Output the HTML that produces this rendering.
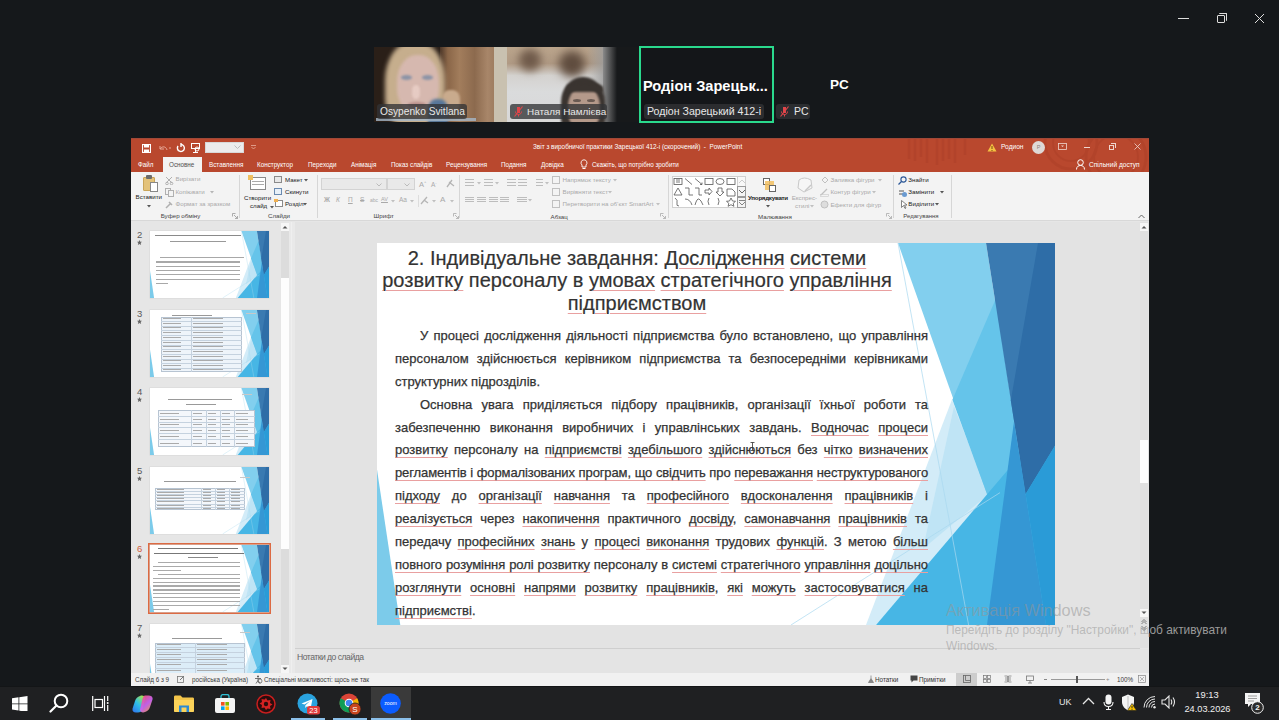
<!DOCTYPE html>
<html><head><meta charset="utf-8">
<style>
*{box-sizing:border-box}
html,body{margin:0;padding:0;width:1279px;height:720px;overflow:hidden;background:#15181b;font-family:"Liberation Sans",sans-serif}
.a{position:absolute}
.t{position:absolute;white-space:nowrap;line-height:1}
/* zoom */
.tile{position:absolute;overflow:hidden}
.lbl{position:absolute;height:15px;background:rgba(50,51,54,.78);border-radius:3px;color:#e8e8e8;font-size:10.5px;line-height:15px;padding:0 3px;white-space:nowrap}
/* ppt */
#ppt{position:absolute;left:131px;top:138px;width:1018px;height:548px;background:#e6e6e6;overflow:hidden}
#titlebar{position:absolute;left:0;top:0;width:1018px;height:34px;background:#b9482e;border-top:1px solid #a04838}
.tab{position:absolute;top:22px;color:#fff;font-size:6.3px;line-height:1;white-space:nowrap}
#ribbon{position:absolute;left:0;top:34px;width:1018px;height:49px;background:#f3f3f3;border-bottom:1px solid #d8d8d8}
.rb{position:absolute;font-size:6.2px;line-height:1;color:#333;white-space:nowrap}
.rg{position:absolute;font-size:6.2px;line-height:1;color:#444;white-space:nowrap}
.dis{color:#a9a9a9}
.sep{position:absolute;top:3px;width:1px;height:43px;background:#d6d6d6}
/* slide */
#slide{position:absolute;left:246px;top:105px;width:678px;height:382px;background:#fff;overflow:hidden}
.ln{position:absolute;left:18px;width:533px;height:23px;font-size:13px;line-height:23px;color:#333;-webkit-text-stroke:.25px #333;text-align:justify;text-align-last:justify;white-space:nowrap}
.u{text-decoration:underline;text-decoration-color:#e9a0a0;text-decoration-thickness:1px;text-underline-offset:3px}
/* taskbar */
#taskbar{position:absolute;left:0;top:686px;width:1279px;height:34px;background:#1f2022;box-shadow:inset 0 1px 0 #131517}
</style></head><body>

<!-- window controls top-right -->
<div class="a" style="left:1178px;top:18px;width:11px;height:1px;background:#ddd"></div>
<div class="a" style="left:1217px;top:15px;width:8px;height:8px;border:1px solid #ddd;border-radius:1px"></div>
<div class="a" style="left:1219px;top:13px;width:8px;height:8px;border-top:1px solid #ddd;border-right:1px solid #ddd;border-radius:1px"></div>
<svg class="a" style="left:1254px;top:13px" width="11" height="11"><path d="M1 1L10 10M10 1L1 10" stroke="#ddd" stroke-width="1"/></svg>

<!-- ZOOM TILES -->

<div class="tile" style="left:374px;top:47px;width:133px;height:75px;background:#2a1f18">
  <div class="a" style="left:66px;top:0;width:56px;height:75px;background:linear-gradient(90deg,#4a3527 0%,#8a6648 14%,#a27d5c 35%,#8c6a4e 62%,#a88669 85%,#9c7b5f 100%)"></div>
  <div class="a" style="left:120px;top:0;width:13px;height:75px;background:#c9c1b0"></div>
  <div class="a" style="left:11px;top:-6px;width:60px;height:86px;border-radius:46% 46% 34% 34%;background:#c6ae8d;filter:blur(2px)"></div>
  <div class="a" style="left:23px;top:8px;width:42px;height:58px;border-radius:46% 46% 42% 42%;background:#d6b8af;filter:blur(1.5px)"></div>
  <div class="a" style="left:27px;top:28px;width:11px;height:5px;border-radius:50%;background:#8b93a6;filter:blur(.8px)"></div>
  <div class="a" style="left:48px;top:28px;width:11px;height:5px;border-radius:50%;background:#8b93a6;filter:blur(.8px)"></div>
  <div class="a" style="left:38px;top:38px;width:8px;height:14px;border-radius:40%;background:#e6cbc3;filter:blur(1px)"></div>
  <div class="a" style="left:34px;top:55px;width:18px;height:5px;border-radius:50%;background:#b98f8a;filter:blur(1px)"></div>
  <div class="a" style="left:68px;top:43px;width:18px;height:22px;border-radius:40%;background:#c9ab8d;filter:blur(1px)"></div>
  <div class="a" style="left:54px;top:52px;width:20px;height:25px;border-radius:40% 40% 0 0;background:#58779a;filter:blur(1.5px)"></div>
  <div class="a" style="left:2px;top:71px;width:100px;height:3px;background:#a6b8c9;opacity:.8;filter:blur(.5px)"></div>
  <div class="lbl" style="left:3px;top:57px;width:90px;font-size:10.2px">Osypenko Svitlana</div>
</div>
<div class="tile" style="left:507px;top:47px;width:133px;height:75px;background:#17191b">
  <div class="a" style="left:0;top:0;width:100px;height:75px;background:linear-gradient(180deg,#bba58c 0%,#b09a84 22%,#d4d2cf 38%,#dadbdc 60%,#d8d8d8 100%)"></div>
  <div class="a" style="left:12px;top:2px;width:22px;height:22px;border-radius:50%;background:#6f5a4a;filter:blur(4px)"></div>
  <div class="a" style="left:52px;top:4px;width:26px;height:26px;border-radius:50%;background:#5f4c3e;filter:blur(5px)"></div>
  <div class="a" style="left:80px;top:0;width:20px;height:75px;background:linear-gradient(90deg,rgba(170,170,170,0) 0%,#9c9c9c 100%)"></div>
  <div class="a" style="left:96px;top:0;width:14px;height:75px;background:linear-gradient(90deg,#8a8a8a,#17191b)"></div>
  <div class="a" style="left:54px;top:30px;width:44px;height:52px;border-radius:48% 48% 18% 18%;background:#3a3430;filter:blur(1.2px)"></div>
  <div class="a" style="left:61px;top:40px;width:32px;height:42px;border-radius:45% 45% 40% 40%;background:#b4998a;filter:blur(1.2px)"></div><div class="a" style="left:66px;top:52px;width:8px;height:3px;border-radius:50%;background:#6a5a52;filter:blur(.6px)"></div><div class="a" style="left:80px;top:52px;width:8px;height:3px;border-radius:50%;background:#6a5a52;filter:blur(.6px)"></div><div class="a" style="left:60px;top:36px;width:36px;height:9px;border-radius:50% 50% 0 0;background:#3a3430;filter:blur(1px)"></div>
  <div class="lbl" style="left:3px;top:57px;width:97px;padding-left:17px;font-size:9.9px">Наталя Намлієва</div>
  <svg class="a" style="left:6px;top:59px" width="11" height="11"><path d="M4 1h3v6h-3z" fill="#e0454a"/><path d="M2.5 5.5c0 2 1.3 3 3 3s3-1 3-3M5.5 8.5v2" stroke="#e0454a" fill="none" stroke-width="1"/><path d="M1.5 10.5L9.5 0.5" stroke="#e0454a" stroke-width="1.2"/></svg>
</div>
<div class="tile" style="left:639px;top:46px;width:135px;height:77px;border:2px solid #2ad98d;background:#141619">
  <div class="t" style="left:2px;top:31px;font-size:14.6px;font-weight:bold;color:#fff">Родіон Зарецьк...</div>
  <div class="lbl" style="left:3px;top:56px;width:120px;font-size:10.6px">Родіон Зарецький 412-і</div>
</div>
<div class="t" style="left:830px;top:78px;font-size:13.5px;font-weight:bold;color:#fff">PC</div>
<div class="lbl" style="left:776px;top:104px;width:34px;padding-left:18px;font-size:10.5px">PC</div>
<svg class="a" style="left:779px;top:106px" width="11" height="11"><path d="M4 1h3v6h-3z" fill="#e0454a"/><path d="M2.5 5.5c0 2 1.3 3 3 3s3-1 3-3M5.5 8.5v2" stroke="#e0454a" fill="none" stroke-width="1"/><path d="M1.5 10.5L9.5 0.5" stroke="#e0454a" stroke-width="1.2"/></svg>


<!-- POWERPOINT -->
<div id="ppt">
  <div id="titlebar">
<svg class="a" style="left:760px;top:0" width="258" height="34" viewBox="0 0 258 34"><g opacity=".1" fill="none" stroke="#7a2010">
<path d="M18 0v20M24 0v22M30 0v18M36 0v24M46 0v26M52 0v22M58 0v20M64 0v24M74 0v16" stroke-width="2.5"/>
<circle cx="180" cy="4" r="26" stroke-width="3"/><circle cx="180" cy="4" r="18" stroke-width="2"/><circle cx="225" cy="18" r="30" stroke-width="3"/><circle cx="225" cy="18" r="22" stroke-width="2"/>
</g></svg>
<svg class="a" style="left:11px;top:5px" width="9" height="9"><rect x="0.5" y="0.5" width="8" height="8" fill="none" stroke="#fff" stroke-width="1.2"/><rect x="2" y="0.5" width="5" height="3" fill="#fff"/><rect x="2" y="5.5" width="5" height="3" fill="#fff"/></svg>
<svg class="a" style="left:27px;top:5px" width="14" height="9"><path d="M2 2v3h4" stroke="#e8a898" fill="none" stroke-width="1"/><path d="M2 5c2-3 6-3 7 1" stroke="#e8a898" fill="none" stroke-width="1"/><path d="M11 4h2" stroke="#e8a898"/></svg>
<svg class="a" style="left:45px;top:4px" width="10" height="10"><path d="M5 1.5a3.5 3.5 0 1 1 -3 1.5" stroke="#fff" fill="none" stroke-width="1.4"/><path d="M5 0v4" stroke="#fff" stroke-width="1.4"/></svg>
<svg class="a" style="left:60px;top:4px" width="10" height="11"><rect x="0.5" y="0.5" width="8" height="5" fill="none" stroke="#fff" stroke-width="1"/><path d="M4.5 5.5v4M2 9.5h5" stroke="#fff"/><circle cx="6" cy="6" r="2" fill="none" stroke="#fff"/></svg>
<div class="a" style="left:74px;top:3px;width:39px;height:11px;background:#ececec;border:1px solid #d8d8d8"></div>
<svg class="a" style="left:103px;top:6px" width="7" height="5"><path d="M0.5 0.5l3 3 3-3" stroke="#bbb" fill="none"/></svg>
<svg class="a" style="left:120px;top:6px" width="5" height="5"><path d="M0 0.5h5M0.5 2l2 2 2-2" stroke="#e8b0a0" fill="none" stroke-width=".8"/></svg>
<div class="tab" style="left:402px;top:5px;font-size:6.4px;top:5px;color:#fff">Звіт з виробничої практики Зарецької 412-і (скорочений)&nbsp; - &nbsp;PowerPoint</div>
<svg class="a" style="left:856px;top:4px" width="10" height="9"><path d="M5 0.5L9.5 8.5H0.5z" fill="#f5c242"/><path d="M5 3v3M5 7v1" stroke="#7a4a10" stroke-width="1"/></svg>
<div class="tab" style="left:870px;top:5px;font-size:6.6px">Родион</div>
<div class="a" style="left:901px;top:2px;width:13px;height:13px;border-radius:50%;background:#dfd9d6;color:#8a7f7a;font-size:5.5px;line-height:13px;text-align:center">Р</div>
<svg class="a" style="left:927px;top:4px" width="9" height="7"><rect x="0.5" y="0.5" width="8" height="6" fill="none" stroke="#efd6ce" stroke-width=".8"/><path d="M3 2.5l1.5 1.5 1.5-1.5z" fill="#efd6ce"/></svg>
<div class="a" style="left:953px;top:8px;width:6px;height:1px;background:#efd6ce"></div>
<div class="a" style="left:978px;top:6px;width:5px;height:5px;border:1px solid #efd6ce"></div>
<div class="a" style="left:980px;top:4px;width:5px;height:5px;border-top:1px solid #efd6ce;border-right:1px solid #efd6ce"></div>
<svg class="a" style="left:1003px;top:4px" width="7" height="7"><path d="M.5 .5L6.5 6.5M6.5 .5L.5 6.5" stroke="#efd6ce" stroke-width=".8"/></svg>
<div class="a" style="left:32px;top:18px;width:39px;height:16px;background:#f3f3f3"></div>
<div class="tab" style="left:7px;top:23px;color:#fff">Файл</div>
<div class="tab" style="left:38px;top:23px;color:#505050">Основне</div>
<div class="tab" style="left:78px;top:23px;color:#fff">Вставлення</div>
<div class="tab" style="left:126px;top:23px;color:#fff">Конструктор</div>
<div class="tab" style="left:177px;top:23px;color:#fff">Переходи</div>
<div class="tab" style="left:220px;top:23px;color:#fff">Анімація</div>
<div class="tab" style="left:260px;top:23px;color:#fff">Показ слайдів</div>
<div class="tab" style="left:315px;top:23px;color:#fff">Рецензування</div>
<div class="tab" style="left:370px;top:23px;color:#fff">Подання</div>
<div class="tab" style="left:410px;top:23px;color:#fff">Довідка</div>
<div class="tab" style="left:461px;top:23px;color:#fff">Скажіть, що потрібно зробити</div>
<svg class="a" style="left:449px;top:20px" width="8" height="11"><path d="M4 0.8a3 3 0 0 1 2 5.2v2h-4v-2a3 3 0 0 1 2-5.2z" fill="none" stroke="#fff" stroke-width=".9"/><path d="M2.5 9.5h3" stroke="#fff"/></svg>
<svg class="a" style="left:945px;top:20px" width="10" height="11"><circle cx="4.5" cy="3.5" r="2.8" fill="none" stroke="#fff" stroke-width="1"/><path d="M0.5 10.5c0-3 2-4 4-4s4 1 4 4" fill="none" stroke="#fff" stroke-width="1"/></svg>
<div class="tab" style="left:958px;top:23px;font-size:6.6px">Спільний доступ</div>
</div>

  <div id="ribbon">
<div class="a" style="left:12px;top:5px;width:12px;height:14px;background:#e3c27a;border:1px solid #c9a55a;border-radius:1px"></div>
<div class="a" style="left:15px;top:3px;width:6px;height:4px;background:#6b6b6b;border-radius:1px"></div>
<div class="a" style="left:19px;top:10px;width:8px;height:10px;background:#fff;border:1px solid #888"></div>
<div class="rb" style="left:4.5px;top:22.4px;font-size:6.2px;color:#222">Вставити</div>
<svg class="a" style="left:16px;top:32.5px" width="5" height="3"><path d="M0 0h4l-2 2.5z" fill="#555"/></svg>
<svg class="a" style="left:34px;top:4px" width="9" height="9"><path d="M1 1l6 6M7 1l-6 6" stroke="#b0b0b0" stroke-width="1"/><circle cx="2" cy="7.5" r="1.3" fill="none" stroke="#b0b0b0"/><circle cx="6.5" cy="7.5" r="1.3" fill="none" stroke="#b0b0b0"/></svg>
<svg class="a" style="left:34px;top:16px" width="9" height="9"><rect x="0.5" y="0.5" width="5" height="6" fill="none" stroke="#b0b0b0"/><rect x="3.5" y="2.5" width="5" height="6" fill="#f3f3f3" stroke="#b0b0b0"/></svg>
<svg class="a" style="left:34px;top:28px" width="9" height="9"><path d="M1 8l4-4M4 2l3 3" stroke="#b0b0b0" stroke-width="1.5"/></svg>
<div class="rb dis" style="left:44.5px;top:4.4px;font-size:6.2px;">Вирізати</div>
<div class="rb dis" style="left:44.5px;top:16.9px;font-size:6.2px;">Копіювати</div>
<svg class="a" style="left:79px;top:19px" width="5" height="3"><path d="M0 0h4l-2 2.5z" fill="#b5b5b5"/></svg>
<div class="rb dis" style="left:44.5px;top:28.9px;font-size:6.2px;">Формат за зразком</div>
<div class="rg" style="left:29.7px;top:41.2px;font-size:6.2px;">Буфер обміну</div>
<svg class="a" style="left:101px;top:41px" width="6" height="6"><path d="M0.5 0.5h3M0.5 0.5v3M2 2l3.5 3.5M5.5 3v2.5H3" stroke="#999" fill="none" stroke-width=".8"/></svg>
<div class="sep" style="left:108px"></div>
<div class="a" style="left:119px;top:5px;width:16px;height:13px;background:#fff;border:1px solid #8a8a8a"></div>
<div class="a" style="left:121px;top:9px;width:12px;height:1px;background:#aaa"></div>
<div class="a" style="left:121px;top:12px;width:12px;height:1px;background:#aaa"></div>
<div class="a" style="left:117px;top:3px;width:5px;height:5px;background:#f0c060"></div>
<div class="rb" style="left:113.0px;top:22.7px;font-size:6.2px;color:#222">Створити</div>
<div class="rb" style="left:119.0px;top:31.2px;font-size:6.2px;color:#222">слайд</div>
<svg class="a" style="left:139px;top:33.5px" width="5" height="3"><path d="M0 0h4l-2 2.5z" fill="#555"/></svg>
<div class="a" style="left:143px;top:4px;width:8px;height:7px;background:#e8e8e8;border:1px solid #8a8a8a"></div>
<div class="a" style="left:143px;top:16px;width:8px;height:7px;background:#e8f0f8;border:1px solid #6a8ab0"></div>
<div class="a" style="left:144px;top:28px;width:8px;height:7px;background:#fff;border:1px solid #8a8a8a"></div>
<div class="a" style="left:143px;top:27px;width:4px;height:3px;background:#f0b050"></div>
<div class="rb" style="left:154.0px;top:4.9px;font-size:6.2px;color:#222">Макет</div>
<svg class="a" style="left:173px;top:7px" width="5" height="3"><path d="M0 0h4l-2 2.5z" fill="#555"/></svg>
<div class="rb" style="left:154.0px;top:16.9px;font-size:6.2px;color:#222">Скинути</div>
<div class="rb" style="left:154.0px;top:29.3px;font-size:6.2px;color:#222">Розділ</div>
<svg class="a" style="left:172px;top:31.400000000000006px" width="5" height="3"><path d="M0 0h4l-2 2.5z" fill="#555"/></svg>
<div class="rg" style="left:137.0px;top:41.2px;font-size:6.2px;">Слайди</div>
<div class="sep" style="left:186px"></div>
<div class="a" style="left:190px;top:6px;width:66px;height:12px;background:#e9e9e9;border:1px solid #d3d3d3"></div>
<div class="a" style="left:256px;top:6px;width:28px;height:12px;background:#e9e9e9;border:1px solid #d3d3d3"></div>
<svg class="a" style="left:245px;top:11px" width="6" height="4"><path d="M0.5 0.5l2.5 2.5 2.5-2.5" stroke="#bbb" fill="none"/></svg>
<svg class="a" style="left:273px;top:11px" width="6" height="4"><path d="M0.5 0.5l2.5 2.5 2.5-2.5" stroke="#bbb" fill="none"/></svg>
<div class="rb dis" style="left:288.0px;top:8.2px;font-size:7.5px;">A<sup style="font-size:4px">+</sup></div>
<div class="rb dis" style="left:300.0px;top:8.8px;font-size:6.5px;">A<sup style="font-size:4px">-</sup></div>
<svg class="a" style="left:315px;top:7px" width="9" height="9"><path d="M1 8l5-7M3 3l5 4" stroke="#b5b5b5" stroke-width="1.3"/></svg>
<div class="rb dis" style="left:193.0px;top:24.8px;font-size:6.5px;"><b>Ж</b></div>
<div class="rb dis" style="left:205.0px;top:24.8px;font-size:6.5px;"><i>К</i></div>
<div class="rb dis" style="left:217.0px;top:24.8px;font-size:6.5px;"><u>П</u></div>
<div class="rb dis" style="left:229.0px;top:24.8px;font-size:6.5px;"><s>S</s></div>
<div class="rb dis" style="left:239.0px;top:25.5px;font-size:5px;">abc</div>
<div class="rb dis" style="left:250.0px;top:25.2px;font-size:5.5px;"><u>AV</u></div>
<div class="rb dis" style="left:268.0px;top:24.8px;font-size:6.5px;">Aa</div>
<div class="rb dis" style="left:309.0px;top:24.0px;font-size:8px;">A</div>
<svg class="a" style="left:260px;top:28px" width="5" height="3"><path d="M0 0h4l-2 2.5z" fill="#c0c0c0"/></svg>
<svg class="a" style="left:279px;top:28px" width="5" height="3"><path d="M0 0h4l-2 2.5z" fill="#c0c0c0"/></svg>
<svg class="a" style="left:301px;top:28px" width="5" height="3"><path d="M0 0h4l-2 2.5z" fill="#c0c0c0"/></svg>
<svg class="a" style="left:319px;top:28px" width="5" height="3"><path d="M0 0h4l-2 2.5z" fill="#c0c0c0"/></svg>
<div class="a" style="left:287px;top:23px;width:1px;height:12px;background:#ddd"></div>
<svg class="a" style="left:289px;top:24px" width="11" height="9"><path d="M1 8l6-7M4 4l4 3" stroke="#b5b5b5" stroke-width="1.3"/></svg>
<div class="rg" style="left:242.6px;top:41.2px;font-size:6.2px;">Шрифт</div>
<svg class="a" style="left:322px;top:41px" width="6" height="6"><path d="M0.5 0.5h3M0.5 0.5v3M2 2l3.5 3.5M5.5 3v2.5H3" stroke="#aaa" fill="none" stroke-width=".8"/></svg>
<div class="sep" style="left:328px"></div>
<div class="a" style="left:334px;top:7px;width:9px;height:1px;background:#bdbdbd"></div>
<div class="a" style="left:334px;top:10px;width:9px;height:1px;background:#bdbdbd"></div>
<div class="a" style="left:334px;top:13px;width:9px;height:1px;background:#bdbdbd"></div>
<svg class="a" style="left:346px;top:10px" width="5" height="3"><path d="M0 0h4l-2 2.5z" fill="#c0c0c0"/></svg>
<div class="a" style="left:353px;top:7px;width:9px;height:1px;background:#bdbdbd"></div>
<div class="a" style="left:353px;top:10px;width:9px;height:1px;background:#bdbdbd"></div>
<div class="a" style="left:353px;top:13px;width:9px;height:1px;background:#bdbdbd"></div>
<svg class="a" style="left:364px;top:10px" width="5" height="3"><path d="M0 0h4l-2 2.5z" fill="#c0c0c0"/></svg>
<div class="a" style="left:376px;top:7px;width:9px;height:1px;background:#bdbdbd"></div>
<div class="a" style="left:376px;top:10px;width:9px;height:1px;background:#bdbdbd"></div>
<div class="a" style="left:376px;top:13px;width:9px;height:1px;background:#bdbdbd"></div>
<div class="a" style="left:387px;top:7px;width:9px;height:1px;background:#bdbdbd"></div>
<div class="a" style="left:387px;top:10px;width:9px;height:1px;background:#bdbdbd"></div>
<div class="a" style="left:387px;top:13px;width:9px;height:1px;background:#bdbdbd"></div>
<div class="a" style="left:405px;top:7px;width:7px;height:1px;background:#bdbdbd"></div>
<div class="a" style="left:405px;top:10px;width:7px;height:1px;background:#bdbdbd"></div>
<div class="a" style="left:405px;top:13px;width:7px;height:1px;background:#bdbdbd"></div>
<svg class="a" style="left:414px;top:10px" width="5" height="3"><path d="M0 0h4l-2 2.5z" fill="#c0c0c0"/></svg>
<div class="a" style="left:334px;top:25px;width:9px;height:1px;background:#bdbdbd"></div>
<div class="a" style="left:334px;top:27px;width:9px;height:1px;background:#bdbdbd"></div>
<div class="a" style="left:334px;top:29px;width:9px;height:1px;background:#bdbdbd"></div>
<div class="a" style="left:346px;top:25px;width:9px;height:1px;background:#bdbdbd"></div>
<div class="a" style="left:346px;top:27px;width:9px;height:1px;background:#bdbdbd"></div>
<div class="a" style="left:346px;top:29px;width:9px;height:1px;background:#bdbdbd"></div>
<div class="a" style="left:358px;top:25px;width:9px;height:1px;background:#bdbdbd"></div>
<div class="a" style="left:358px;top:27px;width:9px;height:1px;background:#bdbdbd"></div>
<div class="a" style="left:358px;top:29px;width:9px;height:1px;background:#bdbdbd"></div>
<div class="a" style="left:369px;top:25px;width:9px;height:1px;background:#bdbdbd"></div>
<div class="a" style="left:369px;top:27px;width:9px;height:1px;background:#bdbdbd"></div>
<div class="a" style="left:369px;top:29px;width:9px;height:1px;background:#bdbdbd"></div>
<div class="a" style="left:386px;top:25px;width:10px;height:1px;background:#bdbdbd"></div>
<div class="a" style="left:386px;top:27px;width:10px;height:1px;background:#bdbdbd"></div>
<div class="a" style="left:386px;top:29px;width:10px;height:1px;background:#bdbdbd"></div>
<svg class="a" style="left:397px;top:27px" width="5" height="3"><path d="M0 0h4l-2 2.5z" fill="#c0c0c0"/></svg>
<div class="a" style="left:550px;top:2px;width:1px;height:38px;background:transparent"></div>
<div class="a" style="left:421px;top:4px;width:8px;height:8px;border:1px solid #c0c0c0"></div>
<div class="a" style="left:421px;top:16px;width:8px;height:8px;border:1px solid #c0c0c0"></div>
<div class="a" style="left:421px;top:28px;width:8px;height:8px;border:1px solid #c0c0c0"></div>
<div class="rb dis" style="left:431.6px;top:4.5px;font-size:6.2px;">Напрямок тексту</div>
<svg class="a" style="left:482px;top:6.599999999999994px" width="5" height="3"><path d="M0 0h4l-2 2.5z" fill="#c0c0c0"/></svg>
<div class="rb dis" style="left:431.6px;top:17.1px;font-size:6.2px;">Вирівняти текст</div>
<svg class="a" style="left:477px;top:19.19999999999999px" width="5" height="3"><path d="M0 0h4l-2 2.5z" fill="#c0c0c0"/></svg>
<div class="rb dis" style="left:431.6px;top:29.2px;font-size:6.2px;">Перетворити на об’єкт SmartArt</div>
<svg class="a" style="left:525px;top:31.30000000000001px" width="5" height="3"><path d="M0 0h4l-2 2.5z" fill="#c0c0c0"/></svg>
<div class="rg" style="left:419.5px;top:41.7px;font-size:6.2px;">Абзац</div>
<svg class="a" style="left:529px;top:41px" width="6" height="6"><path d="M0.5 0.5h3M0.5 0.5v3M2 2l3.5 3.5M5.5 3v2.5H3" stroke="#aaa" fill="none" stroke-width=".8"/></svg>
<div class="sep" style="left:536.5px"></div>
<div class="a" style="left:541px;top:4px;width:74px;height:32px;background:#fff;border:1px solid #d0d0d0"></div>
<svg class="a" style="left:542px;top:5px" width="64" height="30" viewBox="0 0 64 30"><g fill="none" stroke="#555" stroke-width=".8">
<rect x="1" y="1.5" width="8" height="6"/><path d="M3 3h4M3 5h4"/>
<path d="M12 1.5l7 6"/><path d="M22 1.5l7 6M27 7.5h2v-2"/>
<rect x="32" y="1.5" width="8" height="6"/><ellipse cx="47" cy="4.5" rx="4" ry="3"/><rect x="54" y="1.5" width="8" height="6"/>
<path d="M1 18l4-7 4 7z"/><path d="M12 11h4v7h4"/><path d="M22 11h4v7h3"/><path d="M32 13h4v-2l3 3.5-3 3.5v-2h-4z"/><path d="M45 11h4v4h2l-4 4-4-4h2z"/><path d="M54 12h5l3 3v4h-8z"/>
<path d="M2 21q3 2 2 5t2 3"/><path d="M12 22q5 0 7 6"/><path d="M22 28q2-7 4-6t4 6"/><path d="M36 21q-2 3 0 7"/><path d="M45 21q2 3 0 7"/><path d="M58 21l1.5 3 3 .3-2.3 2 .7 3-2.9-1.6-2.9 1.6.7-3-2.3-2 3-.3z"/>
</g></svg>
<div class="a" style="left:606px;top:4px;width:9px;height:11px;border:1px solid #d0d0d0;background:#f8f8f8"></div>
<div class="a" style="left:606px;top:14px;width:9px;height:11px;border:1px solid #9a9a9a;background:#f4f4f4"></div>
<div class="a" style="left:606px;top:25px;width:9px;height:11px;border:1px solid #9a9a9a;background:#f4f4f4"></div>
<svg class="a" style="left:607px;top:7px" width="8" height="5"><path d="M1 4l3-3 3 3" stroke="#ccc" fill="none"/></svg>
<svg class="a" style="left:607px;top:17px" width="8" height="5"><path d="M1 1l3 3 3-3" stroke="#666" fill="none"/></svg>
<svg class="a" style="left:607px;top:28px" width="8" height="6"><path d="M1 0.5h6M1 2l3 3 3-3" stroke="#666" fill="none" stroke-width=".8"/></svg>
<div class="a" style="left:632px;top:6px;width:7px;height:7px;background:#fff;border:1px solid #666"></div>
<div class="a" style="left:634px;top:9px;width:9px;height:9px;background:#f2c060;opacity:.85"></div>
<div class="a" style="left:638px;top:13px;width:7px;height:7px;background:#fff;border:1px solid #666"></div>
<div class="rb" style="left:617.0px;top:22.9px;font-size:6.2px;color:#222;font-weight:bold;letter-spacing:-.25px">Упорядкувати</div>
<svg class="a" style="left:635px;top:32.5px" width="5" height="3"><path d="M0 0h4l-2 2.5z" fill="#555"/></svg>
<svg class="a" style="left:665px;top:4px" width="18" height="17"><path d="M3 4q5-4 12 0l1 8-8 4-6-4z" fill="#f6f6f6" stroke="#c8c8c8"/><path d="M9 15l6-6" stroke="#c8c8c8" stroke-width="1.5"/></svg>
<div class="rb dis" style="left:660.7px;top:22.9px;font-size:6.2px;">Експрес-</div>
<div class="rb dis" style="left:664.0px;top:30.9px;font-size:6.2px;">стилі</div>
<svg class="a" style="left:679px;top:33px" width="5" height="3"><path d="M0 0h4l-2 2.5z" fill="#c0c0c0"/></svg>
<svg class="a" style="left:689px;top:4px" width="9" height="9"><path d="M2 4l3-3 3 3-3 3z" fill="none" stroke="#c0c0c0"/></svg>
<svg class="a" style="left:689px;top:16px" width="9" height="9"><path d="M1 7l6-6" stroke="#c0c0c0" stroke-width="1.3"/><rect x="0.5" y="6.5" width="8" height="2" fill="none" stroke="#c8c8c8" stroke-width=".6"/></svg>
<svg class="a" style="left:689px;top:28px" width="9" height="9"><circle cx="4.5" cy="4.5" r="3.5" fill="#ddd" stroke="#c0c0c0"/></svg>
<div class="rb dis" style="left:699.4px;top:4.5px;font-size:6.2px;">Заливка фігури</div>
<svg class="a" style="left:747px;top:6.599999999999994px" width="5" height="3"><path d="M0 0h4l-2 2.5z" fill="#c0c0c0"/></svg>
<div class="rb dis" style="left:699.4px;top:17.1px;font-size:6.2px;">Контур фігури</div>
<svg class="a" style="left:741px;top:19.19999999999999px" width="5" height="3"><path d="M0 0h4l-2 2.5z" fill="#c0c0c0"/></svg>
<div class="rb dis" style="left:699.4px;top:29.5px;font-size:6.2px;">Ефекти для фігур</div>
<div class="rg" style="left:627.0px;top:41.7px;font-size:6.2px;">Малювання</div>
<svg class="a" style="left:755px;top:41px" width="6" height="6"><path d="M0.5 0.5h3M0.5 0.5v3M2 2l3.5 3.5M5.5 3v2.5H3" stroke="#aaa" fill="none" stroke-width=".8"/></svg>
<div class="sep" style="left:761.5px"></div>
<svg class="a" style="left:767px;top:4px" width="9" height="9"><circle cx="5.5" cy="3.5" r="2.6" fill="none" stroke="#2b5797" stroke-width="1.1"/><path d="M3.5 5.5l-3 3" stroke="#2b5797" stroke-width="1.3"/></svg>
<div class="rb" style="left:777.3px;top:4.5px;font-size:6.2px;color:#222">Знайти</div>
<svg class="a" style="left:767px;top:16px" width="10" height="10"><path d="M1 3h5M1 6h7" stroke="#555" stroke-width="1"/><circle cx="6.5" cy="6.5" r="2.5" fill="#6a9ad0"/></svg>
<div class="rb" style="left:777.3px;top:17.1px;font-size:6.2px;color:#222">Замінити</div>
<svg class="a" style="left:809px;top:19.19999999999999px" width="5" height="3"><path d="M0 0h4l-2 2.5z" fill="#555"/></svg>
<svg class="a" style="left:769px;top:28px" width="8" height="9"><path d="M1.5 0.5v7l2-2 1.5 3 1-.5-1.5-3h2.5z" fill="#fff" stroke="#666" stroke-width=".8"/></svg>
<div class="rb" style="left:777.3px;top:28.5px;font-size:6.2px;color:#222">Виділити</div>
<svg class="a" style="left:804px;top:30.599999999999994px" width="5" height="3"><path d="M0 0h4l-2 2.5z" fill="#555"/></svg>
<div class="rg" style="left:772.3px;top:41.4px;font-size:6.0px;">Редагування</div>
<div class="sep" style="left:819.5px"></div>
<svg class="a" style="left:1007px;top:42px" width="7" height="5"><path d="M0.5 4l3-3 3 3" stroke="#666" fill="none"/></svg>
</div>

<div class="a" style="left:0;top:84px;width:159px;height:451px;background:#e6e6e6"></div>
<div class="a" style="left:158px;top:84px;width:6px;height:451px;background:#e9e9e9"></div>
<div class="a" style="left:160px;top:84px;width:1px;height:451px;background:#efefef"></div>
<div class="a" style="left:164px;top:84px;width:854px;height:426px;background:#e3e3e3"></div>
<div class="a" style="left:164px;top:511px;width:854px;height:24px;background:#e4e4e4"></div>
<div class="a" style="left:164px;top:510px;width:845px;height:1px;background:#cfcfcf"></div>
<div class="t" style="left:166px;top:515px;font-size:8.6px;letter-spacing:-.5px;color:#666">Нотатки до слайда</div>
<div class="a" style="left:150px;top:85px;width:8px;height:450px;background:#dcdcdc"></div>
<div class="a" style="left:150px;top:85px;width:8px;height:8px;background:#f6f6f6"></div>
<svg class="a" style="left:151px;top:87px" width="6" height="4"><path d="M0.5 3.5L3 1l2.5 2.5z" fill="#555"/></svg>
<div class="a" style="left:150px;top:140px;width:8px;height:271px;background:#fdfdfd"></div>
<div class="a" style="left:150px;top:527px;width:8px;height:8px;background:#f6f6f6"></div>
<svg class="a" style="left:151px;top:529px" width="6" height="4"><path d="M0.5 0.5L3 3l2.5-2.5z" fill="#555"/></svg>
<div class="a" style="left:1009px;top:84px;width:8px;height:426px;background:#e0e0e0"></div>
<div class="a" style="left:1009px;top:85px;width:8px;height:8px;background:#f6f6f6"></div>
<svg class="a" style="left:1010px;top:87px" width="6" height="4"><path d="M0.5 3.5L3 1l2.5 2.5z" fill="#555"/></svg>
<div class="a" style="left:1009px;top:302px;width:8px;height:43px;background:#fdfdfd"></div>
<div class="a" style="left:1009px;top:471px;width:8px;height:8px;background:#f6f6f6"></div>
<svg class="a" style="left:1010px;top:473px" width="6" height="4"><path d="M0.5 0.5L3 3l2.5-2.5z" fill="#555"/></svg>
<svg class="a" style="left:1010px;top:480px" width="6" height="14"><path d="M0.5 4L3 1.5 5.5 4M0.5 6L3 3.5 5.5 6M0.5 8l2.5 2.5L5.5 8M0.5 10l2.5 2.5 2.5-2.5" stroke="#666" fill="none" stroke-width=".8"/></svg>
<!--THUMBS-->
<svg width="0" height="0" style="position:absolute"><defs><symbol id="deco" viewBox="0 0 678 381"><polygon points="575.0,156.0 613.0,256.0 499.0,381.0 489.0,381.0" fill="#d3ecf8"/><polygon points="577.0,163.0 611.0,251.0 546.0,305.0" fill="#bfe4f5"/>
<polygon points="521.0,0.0 609.0,0.0 642.5,212.0 611.0,253.0" fill="#82cfee"/>
<polygon points="618.8,55.5 642.5,212.0 611.0,253.0 575.4,156.3" fill="#65c4ea"/>
<polygon points="499.0,381.0 678.0,171.0 678.0,381.0" fill="#47b6e5"/>
<polygon points="609.0,0.0 678.0,0.0 678.0,202.0 648.6,250.4" fill="#3a7ab1"/>
<polygon points="661.0,0.0 678.0,0.0 678.0,202.0 648.6,250.4 633.8,157.0" fill="#2e6da7"/>
<polygon points="637.0,178.0 648.6,250.4 669.0,381.0 610.0,381.0" fill="#3597d4"/>
<polygon points="678.0,202.0 648.6,250.4 669.0,381.0 678.0,381.0" fill="#2a9bd7"/>
<polygon points="0.0,226.0 0.0,381.0 23.3,381.0" fill="#7ccbea"/>
<line x1="521" y1="0" x2="591.6" y2="381" stroke="#a9d9ef" stroke-width="2"/>
<line x1="414" y1="381" x2="623" y2="249" stroke="#a9d9ef" stroke-width="2"/>
</symbol></defs></svg>
<div class="t" style="left:6px;top:92px;font-size:9.5px;color:#5a5a5a">2</div>
<svg class="a" style="left:6px;top:102px" width="5" height="5"><path d="M2.5 0l.8 1.7 1.7.1-1.3 1.2.4 1.9-1.6-1-1.6 1 .4-1.9L0 1.8l1.7-.1z" fill="#666"/></svg>
<div class="a" style="left:19px;top:93px;width:119px;height:67px;background:#fff;overflow:hidden;box-shadow:0 0 0 .5px #d6d6d6"><svg class="a" style="left:0;top:0" width="119" height="67"><use href="#deco"/></svg><div class="a" style="left:5.0px;top:4.0px;width:86.0px;height:1.2px;background:#8a8a8a"></div><div class="a" style="left:20.0px;top:10.0px;width:56.0px;height:1.2px;background:#999"></div><div class="a" style="left:10.0px;top:26.0px;width:84.0px;height:1.3px;background:#a8a8a8"></div><div class="a" style="left:6.0px;top:30.3px;width:84.0px;height:1.3px;background:#a8a8a8"></div><div class="a" style="left:6.0px;top:34.6px;width:84.0px;height:1.3px;background:#a8a8a8"></div><div class="a" style="left:6.0px;top:38.9px;width:84.0px;height:1.3px;background:#a8a8a8"></div><div class="a" style="left:6.0px;top:43.2px;width:84.0px;height:1.3px;background:#a8a8a8"></div><div class="a" style="left:6.0px;top:47.5px;width:84.0px;height:1.3px;background:#a8a8a8"></div><div class="a" style="left:6.0px;top:51.8px;width:12.0px;height:1.3px;background:#a8a8a8"></div></div>
<div class="t" style="left:6px;top:170.5px;font-size:9.5px;color:#5a5a5a">3</div>
<svg class="a" style="left:6px;top:180.5px" width="5" height="5"><path d="M2.5 0l.8 1.7 1.7.1-1.3 1.2.4 1.9-1.6-1-1.6 1 .4-1.9L0 1.8l1.7-.1z" fill="#666"/></svg>
<div class="a" style="left:19px;top:171.5px;width:119px;height:67px;background:#fff;overflow:hidden;box-shadow:0 0 0 .5px #d6d6d6"><svg class="a" style="left:0;top:0" width="119" height="67"><use href="#deco"/></svg><div class="a" style="left:96.0px;top:3.0px;width:10.0px;height:1px;background:#c8c8c8"></div><div class="a" style="left:22.0px;top:5.0px;width:40.0px;height:1.2px;background:#999"></div><div class="a" style="left:11px;top:7px;width:81px;height:55px;background:#eef4fa;border:.6px solid #b7c4d2"></div><div class="a" style="left:12.5px;top:8.5px;width:18.0px;height:1px;background:#aaa"></div><div class="a" style="left:42.5px;top:8.5px;width:30.6px;height:1px;background:#aaa"></div><div class="a" style="left:11.0px;top:11.0px;width:81.0px;height:0.6px;background:#c5d2df"></div><div class="a" style="left:12.5px;top:13.0px;width:18.0px;height:1px;background:#aaa"></div><div class="a" style="left:42.5px;top:13.0px;width:30.6px;height:1px;background:#aaa"></div><div class="a" style="left:11.0px;top:16.0px;width:81.0px;height:0.6px;background:#c5d2df"></div><div class="a" style="left:12.5px;top:17.5px;width:18.0px;height:1px;background:#aaa"></div><div class="a" style="left:42.5px;top:17.5px;width:30.6px;height:1px;background:#aaa"></div><div class="a" style="left:11.0px;top:20.0px;width:81.0px;height:0.6px;background:#c5d2df"></div><div class="a" style="left:12.5px;top:22.0px;width:18.0px;height:1px;background:#aaa"></div><div class="a" style="left:42.5px;top:22.0px;width:30.6px;height:1px;background:#aaa"></div><div class="a" style="left:11.0px;top:25.0px;width:81.0px;height:0.6px;background:#c5d2df"></div><div class="a" style="left:12.5px;top:27.0px;width:18.0px;height:1px;background:#aaa"></div><div class="a" style="left:42.5px;top:27.0px;width:30.6px;height:1px;background:#aaa"></div><div class="a" style="left:11.0px;top:30.0px;width:81.0px;height:0.6px;background:#c5d2df"></div><div class="a" style="left:12.5px;top:32.0px;width:18.0px;height:1px;background:#aaa"></div><div class="a" style="left:42.5px;top:32.0px;width:30.6px;height:1px;background:#aaa"></div><div class="a" style="left:11.0px;top:35.0px;width:81.0px;height:0.6px;background:#c5d2df"></div><div class="a" style="left:12.5px;top:36.5px;width:18.0px;height:1px;background:#aaa"></div><div class="a" style="left:42.5px;top:36.5px;width:30.6px;height:1px;background:#aaa"></div><div class="a" style="left:11.0px;top:39.0px;width:81.0px;height:0.6px;background:#c5d2df"></div><div class="a" style="left:12.5px;top:41.0px;width:18.0px;height:1px;background:#aaa"></div><div class="a" style="left:42.5px;top:41.0px;width:30.6px;height:1px;background:#aaa"></div><div class="a" style="left:11.0px;top:44.0px;width:81.0px;height:0.6px;background:#c5d2df"></div><div class="a" style="left:12.5px;top:46.0px;width:18.0px;height:1px;background:#aaa"></div><div class="a" style="left:42.5px;top:46.0px;width:30.6px;height:1px;background:#aaa"></div><div class="a" style="left:11.0px;top:49.0px;width:81.0px;height:0.6px;background:#c5d2df"></div><div class="a" style="left:12.5px;top:50.5px;width:18.0px;height:1px;background:#aaa"></div><div class="a" style="left:42.5px;top:50.5px;width:30.6px;height:1px;background:#aaa"></div><div class="a" style="left:11.0px;top:53.0px;width:81.0px;height:0.6px;background:#c5d2df"></div><div class="a" style="left:12.5px;top:55.0px;width:18.0px;height:1px;background:#aaa"></div><div class="a" style="left:42.5px;top:55.0px;width:30.6px;height:1px;background:#aaa"></div><div class="a" style="left:11.0px;top:58.0px;width:81.0px;height:0.6px;background:#c5d2df"></div><div class="a" style="left:12.5px;top:59.5px;width:18.0px;height:1px;background:#aaa"></div><div class="a" style="left:42.5px;top:59.5px;width:30.6px;height:1px;background:#aaa"></div><div class="a" style="left:41.0px;top:7.0px;width:0.6px;height:55px;background:#c5d2df"></div></div>
<div class="t" style="left:6px;top:249px;font-size:9.5px;color:#5a5a5a">4</div>
<svg class="a" style="left:6px;top:259px" width="5" height="5"><path d="M2.5 0l.8 1.7 1.7.1-1.3 1.2.4 1.9-1.6-1-1.6 1 .4-1.9L0 1.8l1.7-.1z" fill="#666"/></svg>
<div class="a" style="left:19px;top:250px;width:119px;height:67px;background:#fff;overflow:hidden;box-shadow:0 0 0 .5px #d6d6d6"><svg class="a" style="left:0;top:0" width="119" height="67"><use href="#deco"/></svg><div class="a" style="left:92.0px;top:6.0px;width:10.0px;height:1px;background:#c8c8c8"></div><div class="a" style="left:18.0px;top:11.0px;width:64.0px;height:1.2px;background:#999"></div><div class="a" style="left:36.0px;top:16.0px;width:30.0px;height:1.2px;background:#999"></div><div class="a" style="left:8px;top:22px;width:97px;height:37px;background:#f4f7fb;border:.6px solid #b7c4d2"></div><div class="a" style="left:9.5px;top:24.5px;width:19.8px;height:1px;background:#aaa"></div><div class="a" style="left:42.5px;top:24.5px;width:9.0px;height:1px;background:#aaa"></div><div class="a" style="left:57.5px;top:24.5px;width:8.4px;height:1px;background:#aaa"></div><div class="a" style="left:71.5px;top:24.5px;width:8.4px;height:1px;background:#aaa"></div><div class="a" style="left:85.5px;top:24.5px;width:12.6px;height:1px;background:#aaa"></div><div class="a" style="left:8.0px;top:28.0px;width:97.0px;height:0.6px;background:#c5d2df"></div><div class="a" style="left:9.5px;top:30.5px;width:19.8px;height:1px;background:#aaa"></div><div class="a" style="left:42.5px;top:30.5px;width:9.0px;height:1px;background:#aaa"></div><div class="a" style="left:57.5px;top:30.5px;width:8.4px;height:1px;background:#aaa"></div><div class="a" style="left:71.5px;top:30.5px;width:8.4px;height:1px;background:#aaa"></div><div class="a" style="left:85.5px;top:30.5px;width:12.6px;height:1px;background:#aaa"></div><div class="a" style="left:8.0px;top:34.0px;width:97.0px;height:0.6px;background:#c5d2df"></div><div class="a" style="left:9.5px;top:36.0px;width:19.8px;height:1px;background:#aaa"></div><div class="a" style="left:42.5px;top:36.0px;width:9.0px;height:1px;background:#aaa"></div><div class="a" style="left:57.5px;top:36.0px;width:8.4px;height:1px;background:#aaa"></div><div class="a" style="left:71.5px;top:36.0px;width:8.4px;height:1px;background:#aaa"></div><div class="a" style="left:85.5px;top:36.0px;width:12.6px;height:1px;background:#aaa"></div><div class="a" style="left:8.0px;top:39.0px;width:97.0px;height:0.6px;background:#c5d2df"></div><div class="a" style="left:9.5px;top:41.5px;width:19.8px;height:1px;background:#aaa"></div><div class="a" style="left:42.5px;top:41.5px;width:9.0px;height:1px;background:#aaa"></div><div class="a" style="left:57.5px;top:41.5px;width:8.4px;height:1px;background:#aaa"></div><div class="a" style="left:71.5px;top:41.5px;width:8.4px;height:1px;background:#aaa"></div><div class="a" style="left:85.5px;top:41.5px;width:12.6px;height:1px;background:#aaa"></div><div class="a" style="left:8.0px;top:45.0px;width:97.0px;height:0.6px;background:#c5d2df"></div><div class="a" style="left:9.5px;top:47.5px;width:19.8px;height:1px;background:#aaa"></div><div class="a" style="left:42.5px;top:47.5px;width:9.0px;height:1px;background:#aaa"></div><div class="a" style="left:57.5px;top:47.5px;width:8.4px;height:1px;background:#aaa"></div><div class="a" style="left:71.5px;top:47.5px;width:8.4px;height:1px;background:#aaa"></div><div class="a" style="left:85.5px;top:47.5px;width:12.6px;height:1px;background:#aaa"></div><div class="a" style="left:8.0px;top:51.0px;width:97.0px;height:0.6px;background:#c5d2df"></div><div class="a" style="left:9.5px;top:54.5px;width:19.8px;height:1px;background:#aaa"></div><div class="a" style="left:42.5px;top:54.5px;width:9.0px;height:1px;background:#aaa"></div><div class="a" style="left:57.5px;top:54.5px;width:8.4px;height:1px;background:#aaa"></div><div class="a" style="left:71.5px;top:54.5px;width:8.4px;height:1px;background:#aaa"></div><div class="a" style="left:85.5px;top:54.5px;width:12.6px;height:1px;background:#aaa"></div><div class="a" style="left:41.0px;top:22.0px;width:0.6px;height:37px;background:#c5d2df"></div><div class="a" style="left:56.0px;top:22.0px;width:0.6px;height:37px;background:#c5d2df"></div><div class="a" style="left:70.0px;top:22.0px;width:0.6px;height:37px;background:#c5d2df"></div><div class="a" style="left:84.0px;top:22.0px;width:0.6px;height:37px;background:#c5d2df"></div></div>
<div class="t" style="left:6px;top:327.5px;font-size:9.5px;color:#5a5a5a">5</div>
<svg class="a" style="left:6px;top:337.5px" width="5" height="5"><path d="M2.5 0l.8 1.7 1.7.1-1.3 1.2.4 1.9-1.6-1-1.6 1 .4-1.9L0 1.8l1.7-.1z" fill="#666"/></svg>
<div class="a" style="left:19px;top:328.5px;width:119px;height:67px;background:#fff;overflow:hidden;box-shadow:0 0 0 .5px #d6d6d6"><svg class="a" style="left:0;top:0" width="119" height="67"><use href="#deco"/></svg><div class="a" style="left:90.0px;top:10.0px;width:10.0px;height:1px;background:#c8c8c8"></div><div class="a" style="left:14.0px;top:14.0px;width:72.0px;height:1.2px;background:#999"></div><div class="a" style="left:5px;top:21px;width:90px;height:22.5px;background:#f4f7fb;border:.6px solid #b7c4d2"></div><div class="a" style="left:6.5px;top:22.0px;width:27.6px;height:1px;background:#aaa"></div><div class="a" style="left:52.5px;top:22.0px;width:8.4px;height:1px;background:#aaa"></div><div class="a" style="left:66.5px;top:22.0px;width:8.4px;height:1px;background:#aaa"></div><div class="a" style="left:80.5px;top:22.0px;width:9.6px;height:1px;background:#aaa"></div><div class="a" style="left:5.0px;top:24.0px;width:90.0px;height:0.6px;background:#c5d2df"></div><div class="a" style="left:6.5px;top:25.0px;width:27.6px;height:1px;background:#aaa"></div><div class="a" style="left:52.5px;top:25.0px;width:8.4px;height:1px;background:#aaa"></div><div class="a" style="left:66.5px;top:25.0px;width:8.4px;height:1px;background:#aaa"></div><div class="a" style="left:80.5px;top:25.0px;width:9.6px;height:1px;background:#aaa"></div><div class="a" style="left:5.0px;top:27.0px;width:90.0px;height:0.6px;background:#c5d2df"></div><div class="a" style="left:6.5px;top:28.2px;width:27.6px;height:1px;background:#aaa"></div><div class="a" style="left:52.5px;top:28.2px;width:8.4px;height:1px;background:#aaa"></div><div class="a" style="left:66.5px;top:28.2px;width:8.4px;height:1px;background:#aaa"></div><div class="a" style="left:80.5px;top:28.2px;width:9.6px;height:1px;background:#aaa"></div><div class="a" style="left:5.0px;top:30.5px;width:90.0px;height:0.6px;background:#c5d2df"></div><div class="a" style="left:6.5px;top:31.5px;width:27.6px;height:1px;background:#aaa"></div><div class="a" style="left:52.5px;top:31.5px;width:8.4px;height:1px;background:#aaa"></div><div class="a" style="left:66.5px;top:31.5px;width:8.4px;height:1px;background:#aaa"></div><div class="a" style="left:80.5px;top:31.5px;width:9.6px;height:1px;background:#aaa"></div><div class="a" style="left:5.0px;top:33.5px;width:90.0px;height:0.6px;background:#c5d2df"></div><div class="a" style="left:6.5px;top:34.8px;width:27.6px;height:1px;background:#aaa"></div><div class="a" style="left:52.5px;top:34.8px;width:8.4px;height:1px;background:#aaa"></div><div class="a" style="left:66.5px;top:34.8px;width:8.4px;height:1px;background:#aaa"></div><div class="a" style="left:80.5px;top:34.8px;width:9.6px;height:1px;background:#aaa"></div><div class="a" style="left:5.0px;top:37.0px;width:90.0px;height:0.6px;background:#c5d2df"></div><div class="a" style="left:6.5px;top:38.0px;width:27.6px;height:1px;background:#aaa"></div><div class="a" style="left:52.5px;top:38.0px;width:8.4px;height:1px;background:#aaa"></div><div class="a" style="left:66.5px;top:38.0px;width:8.4px;height:1px;background:#aaa"></div><div class="a" style="left:80.5px;top:38.0px;width:9.6px;height:1px;background:#aaa"></div><div class="a" style="left:5.0px;top:40.0px;width:90.0px;height:0.6px;background:#c5d2df"></div><div class="a" style="left:6.5px;top:41.2px;width:27.6px;height:1px;background:#aaa"></div><div class="a" style="left:52.5px;top:41.2px;width:8.4px;height:1px;background:#aaa"></div><div class="a" style="left:66.5px;top:41.2px;width:8.4px;height:1px;background:#aaa"></div><div class="a" style="left:80.5px;top:41.2px;width:9.6px;height:1px;background:#aaa"></div><div class="a" style="left:51.0px;top:21.0px;width:0.6px;height:22.5px;background:#c5d2df"></div><div class="a" style="left:65.0px;top:21.0px;width:0.6px;height:22.5px;background:#c5d2df"></div><div class="a" style="left:79.0px;top:21.0px;width:0.6px;height:22.5px;background:#c5d2df"></div></div>
<div class="a" style="left:17px;top:405px;width:123px;height:71px;border:2px solid #dc6a43"></div>
<div class="t" style="left:6px;top:406px;font-size:9.5px;color:#d0603a">6</div>
<svg class="a" style="left:6px;top:416px" width="5" height="5"><path d="M2.5 0l.8 1.7 1.7.1-1.3 1.2.4 1.9-1.6-1-1.6 1 .4-1.9L0 1.8l1.7-.1z" fill="#666"/></svg>
<div class="a" style="left:19px;top:407px;width:119px;height:67px;background:#fff;overflow:hidden;box-shadow:0 0 0 .5px #d6d6d6"><svg class="a" style="left:0;top:0" width="119" height="67"><use href="#deco"/></svg><div class="a" style="left:8.0px;top:3.0px;width:80.0px;height:1.3px;background:#777"></div><div class="a" style="left:4.0px;top:7.5px;width:90.0px;height:1.3px;background:#777"></div><div class="a" style="left:38.0px;top:12.0px;width:30.0px;height:1.3px;background:#888"></div><div class="a" style="left:8.0px;top:17.0px;width:82.0px;height:1.3px;background:#aaa"></div><div class="a" style="left:3.0px;top:20.9px;width:87.0px;height:1.3px;background:#aaa"></div><div class="a" style="left:3.0px;top:24.8px;width:28.0px;height:1.3px;background:#aaa"></div><div class="a" style="left:8.0px;top:28.7px;width:82.0px;height:1.3px;background:#aaa"></div><div class="a" style="left:3.0px;top:32.6px;width:87.0px;height:1.3px;background:#aaa"></div><div class="a" style="left:3.0px;top:36.5px;width:87.0px;height:1.3px;background:#aaa"></div><div class="a" style="left:3.0px;top:40.4px;width:87.0px;height:1.3px;background:#aaa"></div><div class="a" style="left:3.0px;top:44.3px;width:87.0px;height:1.3px;background:#aaa"></div><div class="a" style="left:3.0px;top:48.2px;width:87.0px;height:1.3px;background:#aaa"></div><div class="a" style="left:3.0px;top:52.1px;width:87.0px;height:1.3px;background:#aaa"></div><div class="a" style="left:3.0px;top:56.0px;width:87.0px;height:1.3px;background:#aaa"></div><div class="a" style="left:3.0px;top:59.9px;width:87.0px;height:1.3px;background:#aaa"></div><div class="a" style="left:3.0px;top:63.8px;width:16.0px;height:1.3px;background:#aaa"></div></div>
<div class="t" style="left:6px;top:484.5px;font-size:9.5px;color:#5a5a5a">7</div>
<svg class="a" style="left:6px;top:494.5px" width="5" height="5"><path d="M2.5 0l.8 1.7 1.7.1-1.3 1.2.4 1.9-1.6-1-1.6 1 .4-1.9L0 1.8l1.7-.1z" fill="#666"/></svg>
<div class="a" style="left:19px;top:485.5px;width:119px;height:67px;background:#fff;overflow:hidden;box-shadow:0 0 0 .5px #d6d6d6"><svg class="a" style="left:0;top:0" width="119" height="67"><use href="#deco"/></svg><div class="a" style="left:90.0px;top:8.0px;width:10.0px;height:1px;background:#c8c8c8"></div><div class="a" style="left:22.0px;top:14.0px;width:50.0px;height:1.2px;background:#999"></div><div class="a" style="left:5px;top:19px;width:90px;height:42px;background:#dcedf8;border:.6px solid #b7c4d2"></div><div class="a" style="left:6.5px;top:20.5px;width:24.0px;height:1px;background:#aaa"></div><div class="a" style="left:46.5px;top:20.5px;width:30.0px;height:1px;background:#aaa"></div><div class="a" style="left:5.0px;top:23.0px;width:90.0px;height:0.6px;background:#c5d2df"></div><div class="a" style="left:6.5px;top:25.0px;width:24.0px;height:1px;background:#aaa"></div><div class="a" style="left:46.5px;top:25.0px;width:30.0px;height:1px;background:#aaa"></div><div class="a" style="left:5.0px;top:28.0px;width:90.0px;height:0.6px;background:#c5d2df"></div><div class="a" style="left:6.5px;top:30.0px;width:24.0px;height:1px;background:#aaa"></div><div class="a" style="left:46.5px;top:30.0px;width:30.0px;height:1px;background:#aaa"></div><div class="a" style="left:5.0px;top:33.0px;width:90.0px;height:0.6px;background:#c5d2df"></div><div class="a" style="left:6.5px;top:35.0px;width:24.0px;height:1px;background:#aaa"></div><div class="a" style="left:46.5px;top:35.0px;width:30.0px;height:1px;background:#aaa"></div><div class="a" style="left:5.0px;top:38.0px;width:90.0px;height:0.6px;background:#c5d2df"></div><div class="a" style="left:6.5px;top:40.5px;width:24.0px;height:1px;background:#aaa"></div><div class="a" style="left:46.5px;top:40.5px;width:30.0px;height:1px;background:#aaa"></div><div class="a" style="left:5.0px;top:44.0px;width:90.0px;height:0.6px;background:#c5d2df"></div><div class="a" style="left:6.5px;top:46.5px;width:24.0px;height:1px;background:#aaa"></div><div class="a" style="left:46.5px;top:46.5px;width:30.0px;height:1px;background:#aaa"></div><div class="a" style="left:5.0px;top:50.0px;width:90.0px;height:0.6px;background:#c5d2df"></div><div class="a" style="left:6.5px;top:52.0px;width:24.0px;height:1px;background:#aaa"></div><div class="a" style="left:46.5px;top:52.0px;width:30.0px;height:1px;background:#aaa"></div><div class="a" style="left:5.0px;top:55.0px;width:90.0px;height:0.6px;background:#c5d2df"></div><div class="a" style="left:6.5px;top:57.5px;width:24.0px;height:1px;background:#aaa"></div><div class="a" style="left:46.5px;top:57.5px;width:30.0px;height:1px;background:#aaa"></div><div class="a" style="left:45.0px;top:19.0px;width:0.6px;height:42px;background:#c5d2df"></div></div>
<!--/THUMBS-->
<div class="a" style="left:0;top:535px;width:1018px;height:13px;background:#f1f1f1"></div>
<div class="t" style="left:4px;top:539px;font-size:6.3px;color:#3a3a3a">Слайд 6 з 9</div>
<div class="t" style="left:61px;top:539px;font-size:6.3px;color:#3a3a3a">російська (Україна)</div>
<div class="t" style="left:133px;top:539px;font-size:6.3px;color:#3a3a3a">Спеціальні можливості: щось не так</div>
<svg class="a" style="left:46px;top:537px" width="8" height="8"><rect x="0.5" y="1.5" width="6" height="6" fill="none" stroke="#777" stroke-width=".8"/><path d="M3 5l4-4" stroke="#777"/></svg>
<svg class="a" style="left:123px;top:537px" width="9" height="9"><circle cx="4" cy="1.5" r="1" fill="#555"/><path d="M1 3.5h6M4 3.5v2l-2 3M4 5.5l2 3" stroke="#555" fill="none" stroke-width=".8"/><circle cx="6" cy="6" r="2" fill="none" stroke="#555" stroke-width=".7"/></svg>
<svg class="a" style="left:737px;top:537px" width="6" height="8"><path d="M3 0.5v3M0.5 7.5l2.5-4 2.5 4z" stroke="#666" fill="#888" stroke-width=".6"/></svg>
<div class="t" style="left:744px;top:539px;font-size:6.3px;color:#333">Нотатки</div>
<svg class="a" style="left:779px;top:537px" width="8" height="8"><path d="M0.5 0.5h7v5h-4l-2 2v-2h-1z" fill="#444"/></svg>
<div class="t" style="left:788px;top:539px;font-size:6.3px;color:#333">Примітки</div>
<div class="a" style="left:825px;top:535px;width:21px;height:13px;background:#cdcdcd"></div>
<svg class="a" style="left:832px;top:537px" width="8" height="8"><rect x="0.5" y="0.5" width="7" height="7" fill="none" stroke="#666" stroke-width=".8"/><path d="M2.5 0.5v5h5" stroke="#666" fill="none" stroke-width=".8"/></svg>
<svg class="a" style="left:852px;top:537px" width="8" height="8"><rect x="0.5" y="0.5" width="3" height="3" fill="none" stroke="#777" stroke-width=".7"/><rect x="4.5" y="0.5" width="3" height="3" fill="none" stroke="#777" stroke-width=".7"/><rect x="0.5" y="4.5" width="3" height="3" fill="none" stroke="#777" stroke-width=".7"/><rect x="4.5" y="4.5" width="3" height="3" fill="none" stroke="#777" stroke-width=".7"/></svg>
<svg class="a" style="left:873px;top:537px" width="8" height="8"><path d="M0.5 1h3v6h-3M7.5 1h-3v6h3M1 3h2M1 5h2M5 3h2M5 5h2" stroke="#777" fill="none" stroke-width=".7"/></svg>
<svg class="a" style="left:895px;top:537px" width="8" height="9"><rect x="0.5" y="1" width="7" height="4.5" fill="none" stroke="#777" stroke-width=".8"/><path d="M4 5.5v2.5M2 8h4" stroke="#777" stroke-width=".8"/></svg>
<div class="a" style="left:913px;top:541px;width:3px;height:1px;background:#888"></div>
<div class="a" style="left:920px;top:541px;width:54px;height:1px;background:#999"></div>
<div class="a" style="left:945px;top:538px;width:2px;height:7px;background:#555"></div>
<div class="t" style="left:975px;top:538px;font-size:6px;color:#888">+</div>
<div class="t" style="left:986px;top:539px;font-size:6.3px;color:#3a3a3a">100%</div>
<svg class="a" style="left:1007px;top:537px" width="8" height="8"><rect x="0.5" y="0.5" width="7" height="7" fill="none" stroke="#888" stroke-width=".7"/><path d="M2 2l4 4M6 2l-4 4" stroke="#888" stroke-width=".6"/></svg>
  <div id="slide">
<svg class="a" style="left:0;top:0" width="678" height="382" viewBox="0 0 678 381" preserveAspectRatio="none">
<polygon points="575.0,156.0 613.0,256.0 499.0,381.0 489.0,381.0" fill="#d3ecf8"/><polygon points="577.0,163.0 611.0,251.0 546.0,305.0" fill="#bfe4f5"/>
<polygon points="521.0,0.0 609.0,0.0 642.5,212.0 611.0,253.0" fill="#82cfee"/>
<polygon points="618.8,55.5 642.5,212.0 611.0,253.0 575.4,156.3" fill="#65c4ea"/>
<polygon points="499.0,381.0 678.0,171.0 678.0,381.0" fill="#47b6e5"/>
<polygon points="609.0,0.0 678.0,0.0 678.0,202.0 648.6,250.4" fill="#3a7ab1"/>
<polygon points="661.0,0.0 678.0,0.0 678.0,202.0 648.6,250.4 633.8,157.0" fill="#2e6da7"/>
<polygon points="637.0,178.0 648.6,250.4 669.0,381.0 610.0,381.0" fill="#3597d4"/>
<polygon points="678.0,202.0 648.6,250.4 669.0,381.0 678.0,381.0" fill="#2a9bd7"/>
<polygon points="0.0,226.0 0.0,381.0 23.3,381.0" fill="#7ccbea"/>
<line x1="521" y1="0" x2="591.6" y2="381" stroke="#a9d9ef" stroke-width=".7"/>
<line x1="414" y1="381" x2="623" y2="249" stroke="#a9d9ef" stroke-width=".7"/>
</svg>
<div class="t" style="left:0;width:520px;text-align:center;top:4.7px;font-size:20px;line-height:20px;color:#333;-webkit-text-stroke:.2px #333">2. Індивідуальне завдання: <span class="u">Дослідження</span> <span class="u">системи</span></div>
<div class="t" style="left:0;width:520px;text-align:center;top:27.3px;font-size:20px;line-height:20px;color:#333;-webkit-text-stroke:.2px #333"><span class="u">розвитку</span> персоналу в <span class="u">умовах</span> <span class="u">стратегічного</span> <span class="u">управління</span></div>
<div class="t" style="left:0;width:520px;text-align:center;top:50.1px;font-size:20px;line-height:20px;color:#333;-webkit-text-stroke:.2px #333"><span class="u">підприємством</span></div>
<div class="ln" style="top:80.9px;left:43px;width:508px">У процесі дослідження діяльності підприємства було встановлено, що управління</div>
<div class="ln" style="top:103.8px">персоналом здійснюється керівником підприємства та безпосередніми керівниками</div>
<div class="ln" style="top:126.7px;text-align:left;text-align-last:left">структурних підрозділів.</div>
<div class="ln" style="top:149.6px;left:43px;width:508px">Основна увага приділяється підбору працівників, організації їхньої роботи та</div>
<div class="ln" style="top:172.5px">забезпеченню виконання виробничих і управлінських завдань. <span class="u">Водночас</span> <span class="u">процеси</span></div>
<div class="ln" style="top:195.4px"><span class="u">розвитку</span> персоналу на <span class="u">підприємстві</span> <span class="u">здебільшого</span> <span class="u">здійснюються</span> без <span class="u">чітко</span> <span class="u">визначених</span></div>
<div class="ln" style="top:218.3px;letter-spacing:-.12px"><span class="u">регламентів і формалізованих програм, що свідчить</span> про <span class="u">переважання</span> <span class="u">неструктурованого</span></div>
<div class="ln" style="top:241.2px"><span class="u">підходу</span> до <span class="u">організації</span> <span class="u">навчання</span> та <span class="u">професійного</span> <span class="u">вдосконалення</span> <span class="u">працівників</span> і</div>
<div class="ln" style="top:264.1px"><span class="u">реалізується</span> через <span class="u">накопичення</span> практичного <span class="u">досвіду</span>, <span class="u">самонавчання</span> <span class="u">працівників</span> та</div>
<div class="ln" style="top:287.0px">передачу <span class="u">професійних</span> <span class="u">знань</span> у <span class="u">процесі</span> <span class="u">виконання</span> трудових <span class="u">функцій</span>. З метою <span class="u">більш</span></div>
<div class="ln" style="top:309.9px;letter-spacing:-.04px"><span class="u">повного розуміння ролі розвитку</span> персоналу в <span class="u">системі</span> <span class="u">стратегічного</span> <span class="u">управління</span> <span class="u">доцільно</span></div>
<div class="ln" style="top:332.8px"><span class="u">розглянути</span> <span class="u">основні</span> <span class="u">напрями</span> <span class="u">розвитку</span> <span class="u">працівників</span>, <span class="u">які</span> <span class="u">можуть</span> <span class="u">застосовуватися</span> на</div>
<div class="ln" style="top:355.7px;text-align:left;text-align-last:left"><span class="u">підприємстві</span>.</div>
<svg class="a" style="left:373px;top:199px" width="5" height="9"><path d="M0.5 0.5h4M2.5 0.5v8M0.5 8.5h4" stroke="#333" stroke-width=".8" fill="none"/></svg>
</div>
</div>

<div class="a" style="left:0;top:0;width:1149px;height:686px;overflow:hidden;pointer-events:none">
<div class="t" style="left:946px;top:601.5px;font-size:16.3px;color:rgba(150,150,150,.55)">Активація Windows</div>
<div class="t" style="left:946px;top:624.5px;font-size:11.9px;color:rgba(150,150,150,.55)">Перейдіть до розділу "Настройки", щоб активувати</div>
<div class="t" style="left:946px;top:640.5px;font-size:11.9px;color:rgba(150,150,150,.55)">Windows.</div>
</div>
<div class="a" style="left:1149px;top:0;width:130px;height:686px;overflow:hidden;pointer-events:none">
<div class="t" style="left:-203px;top:624.5px;font-size:11.9px;color:#9a9a9a">Перейдіть до розділу "Настройки", щоб активувати</div>
</div>
<!-- TASKBAR -->
<div id="taskbar">
<svg class="a" style="left:12px;top:10px" width="16px" height="15px" viewBox="0 0 16 15"><path d="M0 2.2l6.5-.9v6.2H0zM7.3 1.2L15.5 0v7.5H7.3zM0 8.3h6.5v6.2L0 13.6zM7.3 8.3h8.2v7.5l-8.2-1.1z" fill="#fff"/></svg>
<svg class="a" style="left:49px;top:7px" width="21px" height="20px" viewBox="0 0 21 20"><circle cx="12" cy="8" r="6.3" fill="none" stroke="#fff" stroke-width="2"/><path d="M7.5 12.5L1.5 18.5" stroke="#fff" stroke-width="2.2" stroke-linecap="round"/></svg>
<svg class="a" style="left:92px;top:10px" width="17px" height="15px" viewBox="0 0 17 15"><path d="M0.7 0v15M12.5 0v15" stroke="#fff" stroke-width="1.2"/><rect x="3" y="3.5" width="7.5" height="8" fill="none" stroke="#fff" stroke-width="1.2"/><path d="M15.7 0v5M15.7 9v6" stroke="#fff" stroke-width="1.2"/><circle cx="15.7" cy="7" r="1" fill="#fff"/></svg>
<svg class="a" style="left:132px;top:9px" width="21px" height="18px" viewBox="0 0 21 18"><defs><linearGradient id="cg1" x1="0" y1="1" x2=".7" y2="0"><stop offset="0" stop-color="#2f6ff0"/><stop offset=".55" stop-color="#2fc0e6"/><stop offset="1" stop-color="#9ce05a"/></linearGradient><linearGradient id="cg2" x1=".2" y1="0" x2=".9" y2="1"><stop offset="0" stop-color="#f2507a"/><stop offset=".5" stop-color="#c864f0"/><stop offset="1" stop-color="#f7a04a"/></linearGradient></defs>
<path d="M8 1c2.5-1 5 0 5 2.5L10.5 14c-.6 2.5-2.5 3.5-4.5 3.5H4C1.5 17.5 0 16 .6 13.5L3 6C4 3 5.5 2 8 1z" fill="url(#cg1)"/><path d="M13 .5h3.5c2.8 0 4.6 1.5 4 4L18 12c-1 3-2.5 4-5 5-2.5 1-5 0-5-2.5L10.5 4c.5-2.3 1.5-3.5 2.5-3.5z" fill="url(#cg2)" opacity=".95"/></svg>
<svg class="a" style="left:174px;top:9px" width="20px" height="17px" viewBox="0 0 20 17"><path d="M0 2c0-1 .5-1.5 1.5-1.5h5l2 2h10c1 0 1.5.5 1.5 1.5v11c0 1-.5 1.5-1.5 1.5h-17C.5 16.5 0 16 0 15z" fill="#f4c54a"/><path d="M0 5h20v11c0 .5-.5 1-1 1H1c-.5 0-1-.5-1-1z" fill="#fbd35a"/><rect x="5" y="10.5" width="10" height="6.5" fill="#2a8ad4"/><rect x="7.5" y="12.5" width="5" height="4.5" fill="#fbd35a"/></svg>
<svg class="a" style="left:214px;top:8px" width="22px" height="19px" viewBox="0 0 22 19"><path d="M7 4V2.5c0-1 1-2 2-2h4c1 0 2 1 2 2V4" fill="none" stroke="#2ec0d6" stroke-width="1.3"/><rect x="1" y="4" width="20" height="15" rx="2" fill="#f4f4f4"/><rect x="7" y="8" width="3.6" height="3.6" fill="#f25022"/><rect x="11.4" y="8" width="3.6" height="3.6" fill="#7fba00"/><rect x="7" y="12.4" width="3.6" height="3.6" fill="#00a4ef"/><rect x="11.4" y="12.4" width="3.6" height="3.6" fill="#ffb900"/></svg>
<svg class="a" style="left:256px;top:8px" width="20px" height="20px" viewBox="0 0 20 20"><circle cx="10" cy="10" r="9" fill="#2a0d0d" stroke="#c81e1e" stroke-width="1.5"/><path d="M10 4l1.5 2.5 3-.5-.5 3 2.5 1.5-2.5 1.5.5 3-3-.5L10 16l-1.5-2.5-3 .5.5-3L3.5 9.5 6 8l-.5-3 3 .5z" fill="#d42222"/><circle cx="10" cy="10" r="2.2" fill="#2a0d0d"/></svg>
<svg class="a" style="left:297px;top:7px" width="24px" height="23px" viewBox="0 0 24 23"><circle cx="10.5" cy="10.5" r="10" fill="#2aa3df"/><path d="M4.5 10.5l11-4.5-2 10-3.5-2.7-1.8 1.7.2-2.8 4.5-4-5.5 3.3z" fill="#fff"/><rect x="10" y="13" width="13" height="8.5" rx="2.5" fill="#e13b3b"/><text x="16.5" y="20" font-family="Liberation Sans" font-size="7.5" fill="#fff" text-anchor="middle">23</text></svg>
<svg class="a" style="left:339px;top:7px" width="23px" height="23px" viewBox="0 0 23 23"><circle cx="10" cy="10" r="9.5" fill="#db4437"/><path d="M10 10L18.2 5.2A9.5 9.5 0 0 1 14.8 18.2z" fill="#f4b400"/><path d="M10 10l4.8 8.2A9.5 9.5 0 0 1 1.8 5.2z" fill="#0f9d58"/><circle cx="10" cy="10" r="4.3" fill="#fff"/><circle cx="10" cy="10" r="3.3" fill="#4285f4"/><circle cx="16" cy="16" r="6" fill="#c8451f" stroke="#1f1f1f" stroke-width=".8"/><text x="16" y="19" font-family="Liberation Sans" font-size="8" fill="#fff" text-anchor="middle">S</text></svg>
<div class="a" style="left:371px;top:1px;width:40px;height:33px;background:#3a3a3a"></div>
<svg class="a" style="left:380px;top:7px" width="21px" height="21px" viewBox="0 0 21 21"><circle cx="10.5" cy="10.5" r="10.3" fill="#0b5cff"/><text x="10.5" y="12.3" font-family="Liberation Sans" font-size="5.2" fill="#fff" text-anchor="middle">zoom</text></svg>
<div class="a" style="left:291px;top:32px;width:34px;height:2px;background:#8cc0ea"></div>
<div class="a" style="left:333px;top:32px;width:34px;height:2px;background:#8cc0ea"></div>
<div class="a" style="left:371px;top:32px;width:40px;height:2px;background:#8cc0ea"></div>
<div class="t" style="left:1059px;top:12px;font-size:9px;color:#e6e6e6">UK</div>
<svg class="a" style="left:1082px;top:11px" width="13px" height="8px" viewBox="0 0 13 8"><path d="M1 7l5.5-5.5L12 7" stroke="#e6e6e6" stroke-width="1.3" fill="none"/></svg>
<svg class="a" style="left:1103px;top:8px" width="11px" height="17px" viewBox="0 0 11 17"><rect x="2.5" y="0.5" width="6" height="10" rx="3" fill="#f4f4f4"/><path d="M1 8c0 3 2 4.5 4.5 4.5S10 11 10 8M5.5 12.5v3M3 15.5h5" stroke="#f4f4f4" stroke-width="1.1" fill="none"/></svg>
<svg class="a" style="left:1121px;top:8px" width="16px" height="17px" viewBox="0 0 16 17"><path d="M7 0.5l6 2.5v5c0 4-3 7-6 8.5-3-1.5-6-4.5-6-8.5v-5z" fill="#f4f4f4"/><path d="M7 2v13" stroke="#888" stroke-width=".5"/><path d="M11 9.5l4.5 7h-9z" fill="#f5c000" stroke="#1d1d1e" stroke-width=".6"/><path d="M11 12v2.3M11 15v.8" stroke="#222" stroke-width=".9"/></svg>
<svg class="a" style="left:1143px;top:9px" width="13px" height="14px" viewBox="0 0 13 14"><path d="M1 12.5a11 11 0 0 1 11-11M3.5 12.5a8.5 8.5 0 0 1 8.5-8.5M6 12.5a6 6 0 0 1 6-6M8.5 12.5a3.5 3.5 0 0 1 3.5-3.5" stroke="#e6e6e6" stroke-width="1" fill="none"/><circle cx="11.5" cy="12.2" r="1.2" fill="#e6e6e6"/></svg>
<svg class="a" style="left:1161px;top:9px" width="15px" height="14px" viewBox="0 0 15 14"><path d="M1 5h3l4-4v12l-4-4H1z" fill="none" stroke="#e6e6e6" stroke-width="1.1"/><path d="M10 4.5q1.5 2.5 0 5M12 2.5q3 4.5 0 9" stroke="#e6e6e6" stroke-width="1.1" fill="none"/></svg>
<div class="t" style="left:1190px;top:5px;width:34px;text-align:center;font-size:9.3px;color:#f0f0f0">19:13</div>
<div class="t" style="left:1184px;top:19px;width:47px;text-align:center;font-size:9.2px;color:#f0f0f0">24.03.2026</div>
<svg class="a" style="left:1244px;top:6px" width="20px" height="22px" viewBox="0 0 20 22"><path d="M1 1h15v11H7l-3 3v-3H1z" fill="#f4f4f4"/><path d="M4 4h9M4 6.5h9M4 9h6" stroke="#888" stroke-width=".8"/><circle cx="13.5" cy="15.5" r="5.8" fill="#2c2c2c" stroke="#f0f0f0" stroke-width="1"/><text x="13.5" y="18.3" font-family="Liberation Sans" font-size="8" font-weight="bold" fill="#f4f4f4" text-anchor="middle">2</text></svg>
</div>


</body></html>
